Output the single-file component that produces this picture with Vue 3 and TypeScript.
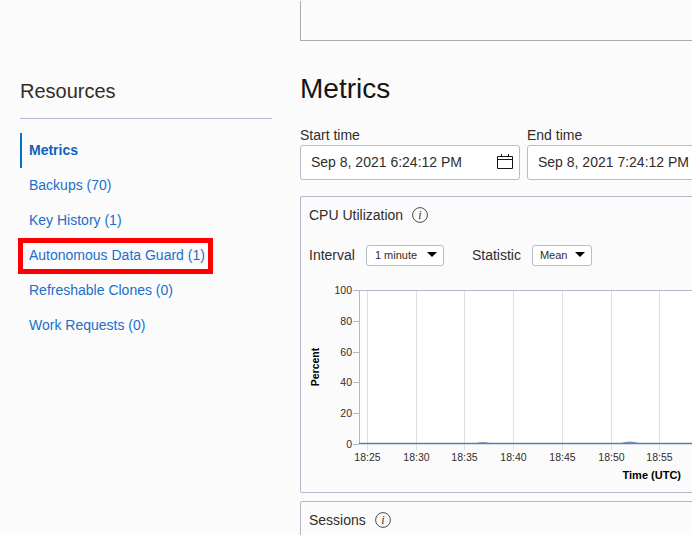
<script setup lang="ts">
interface NavItem {
  label: string,
  active?: boolean,
  marked?: boolean,
}

const navItems: NavItem[] = [
  { label: 'Metrics', active: true },
  { label: 'Backups (70)' },
  { label: 'Key History (1)' },
  { label: 'Autonomous Data Guard (1)', marked: true },
  { label: 'Refreshable Clones (0)' },
  { label: 'Work Requests (0)' },
];

const dates = [
  { label: 'Start time', value: 'Sep 8, 2021 6:24:12 PM' },
  { label: 'End time', value: 'Sep 8, 2021 7:24:12 PM' },
];

// chart axis values, x positions are in svg coordinates
const yTicks = [
  { label: '100', y: 290 },
  { label: '80', y: 321 },
  { label: '60', y: 352 },
  { label: '40', y: 382 },
  { label: '20', y: 413 },
  { label: '0', y: 444 },
];
const xTicks = [
  { label: '18:25', x: 367.5 },
  { label: '18:30', x: 416.5 },
  { label: '18:35', x: 464.5 },
  { label: '18:40', x: 513.5 },
  { label: '18:45', x: 562.5 },
  { label: '18:50', x: 611.5 },
  { label: '18:55', x: 659.5 },
];
</script>

<template>
  <div class="page">
    <aside class="side">
      <h2 class="side-title">Resources</h2>
      <ul class="nav">
        <li
          v-for="item in navItems"
          :key="item.label"
          class="nav-item"
          :class="{ active: item.active }"
        >
          <a class="nav-link">{{ item.label }}</a>
          <span v-if="item.marked" class="mark"></span>
        </li>
      </ul>
    </aside>

    <main class="main">
      <div class="top-box"></div>
      <h1 class="title">Metrics</h1>

      <div class="dates">
        <div v-for="d in dates" :key="d.label" class="date-field">
          <label class="date-label">{{ d.label }}</label>
          <div class="date-input">
            <span>{{ d.value }}</span>
            <svg class="cal" width="16" height="15" viewBox="0 0 16 15" fill="none" stroke="#161513">
              <path d="M.5 2.5h15v12H.5zM.5 5.5h15M4.5 0v2.5M11.5 0v2.5" />
            </svg>
          </div>
        </div>
      </div>

      <section class="card cpu">
        <div class="card-head">
          <span>CPU Utilization</span>
          <svg class="info" width="16" height="16" viewBox="0 0 16 16">
            <circle cx="8" cy="8" r="7.4" fill="none" stroke="#4f4b48" />
            <text x="8" y="12" class="info-i">i</text>
          </svg>
        </div>
        <div class="filters">
          <span class="filter-label">Interval</span>
          <div class="select interval">
            <span>1 minute</span><i class="caret"></i>
          </div>
          <span class="filter-label second">Statistic</span>
          <div class="select statistic">
            <span>Mean</span><i class="caret"></i>
          </div>
        </div>
        <svg class="chart" width="392" height="210" viewBox="301 280 392 210">
          <rect x="359" y="290" width="340" height="154" fill="#fff" />
          <line
            v-for="t in xTicks"
            :key="t.label"
            :x1="t.x"
            :x2="t.x"
            y1="290"
            y2="450"
            stroke="#dfe0e3"
          />
          <line x1="359.5" x2="359.5" y1="290" y2="444" stroke="#b4b8c6" />
          <line x1="359" x2="699" y1="290.5" y2="290.5" stroke="#b4b8c6" />
          <g v-for="t in yTicks" :key="t.label">
            <line x1="353" x2="359" :y1="t.y + 0.5" :y2="t.y + 0.5" stroke="#b4b8c6" />
            <text x="352" :y="t.y + 4" text-anchor="end" class="tick">{{ t.label }}</text>
          </g>
          <text v-for="t in xTicks" :key="t.label" :x="t.x" y="461" text-anchor="middle" class="tick">{{ t.label }}</text>
          <path d="M474 443.5q9-3 18 0zM620 443.5q10-4 20 0z" fill="#7f9cbf" />
          <line x1="359" x2="699" y1="443.5" y2="443.5" stroke="#5b7fa8" stroke-width="1.5" />
          <text transform="translate(319 367) rotate(-90)" text-anchor="middle" class="axis-title percent">Percent</text>
          <text x="681" y="479" text-anchor="end" class="axis-title">Time (UTC)</text>
        </svg>
      </section>

      <section class="card">
        <div class="card-head">
          <span>Sessions</span>
          <svg class="info" width="16" height="16" viewBox="0 0 16 16">
            <circle cx="8" cy="8" r="7.4" fill="none" stroke="#4f4b48" />
            <text x="8" y="12" class="info-i">i</text>
          </svg>
        </div>
      </section>
    </main>
  </div>
</template>

<style>
html, body {
  margin: 0;
  background: #fbfbfc;
  overflow: hidden;
}
</style>

<style scoped>
.page {
  display: flex;
  width: 692px;
  height: 535px;
  overflow: hidden;
  padding-left: 20px;
  box-sizing: border-box;
  background: #fbfbfc;
  font-family: "Liberation Sans", Arial, sans-serif;
  font-size: 14px;
  color: #312d2a;
}

.side {
  flex: 0 0 252px;
  padding-top: 79px;
}

.side-title {
  margin: 0;
  height: 39px;
  line-height: 24px;
  font-size: 20px;
  font-weight: normal;
  color: #312d2a;
  border-bottom: 1px solid #b4b8cf;
  box-sizing: content-box;
}

.nav {
  list-style: none;
  margin: 14px 0 0;
  padding: 0;
}

.nav-item {
  position: relative;
  height: 35px;
  line-height: 34px;
  padding-left: 9px;
  color: #1a6fc9;
}

.nav-item.active {
  font-weight: bold;
  color: #0f62be;
  box-shadow: inset 2px 0 0 #0572ce;
}

.mark {
  position: absolute;
  left: -2px;
  top: 0;
  width: 195px;
  height: 36px;
  box-sizing: border-box;
  border: 5px solid #ff0000;
}

.main {
  flex: 0 0 500px;
  margin-left: 28px;
}

.top-box {
  height: 40px;
  box-sizing: border-box;
  border: 1px solid #aaabad;
  border-top: 0;
  margin-top: 1px;
}

.title {
  margin: 31px 0 0;
  font-size: 28px;
  line-height: 34px;
  font-weight: normal;
  color: #161513;
}

.dates {
  display: flex;
  gap: 7px;
  margin-top: 20px;
}

.date-label {
  display: block;
  height: 19px;
  line-height: 19px;
  color: #312d2a;
}

.date-input {
  width: 220px;
  height: 35px;
  box-sizing: border-box;
  display: flex;
  align-items: center;
  justify-content: space-between;
  padding: 0 6px 2px 10px;
  background: #fff;
  border: 1px solid #b8bcc8;
  border-radius: 3px;
}

.cal {
  flex: none;
}

.card {
  box-sizing: border-box;
  border: 1px solid #b4b8c6;
  border-radius: 2px;
  height: 100px;
  margin-top: 8px;
  padding: 0 8px;
}

.cpu {
  height: 297px;
  margin-top: 16px;
}

.card-head {
  display: flex;
  align-items: center;
  gap: 9px;
  height: 36px;
  color: #312d2a;
}

.info-i {
  font-family: "Liberation Serif", serif;
  font-style: italic;
  font-size: 12px;
  text-anchor: middle;
  fill: #312d2a;
}

.filters {
  display: flex;
  align-items: center;
  height: 21px;
  margin-top: 12px;
}

.filter-label {
  margin-top: -2px;
}

.filter-label.second {
  margin-left: 28px;
}

.select {
  display: flex;
  align-items: center;
  justify-content: space-between;
  box-sizing: border-box;
  height: 21px;
  margin-left: 11px;
  padding: 0 6px 2px 8px;
  background: #fff;
  border: 1px solid #b8bcc8;
  border-radius: 3px;
  font-size: 11px;
}

.interval {
  width: 78px;
}

.statistic {
  width: 60px;
  padding-left: 7px;
}

.caret {
  width: 0;
  height: 0;
  border-left: 5px solid transparent;
  border-right: 5px solid transparent;
  border-top: 5px solid #000;
}

.chart {
  display: block;
  margin: 14px 0 0 -8px;
}

.tick {
  font-size: 10.5px;
  fill: #312d2a;
}

.axis-title {
  font-size: 11px;
  font-weight: bold;
  fill: #000;
}

.axis-title.percent {
  font-size: 10.5px;
}
</style>
